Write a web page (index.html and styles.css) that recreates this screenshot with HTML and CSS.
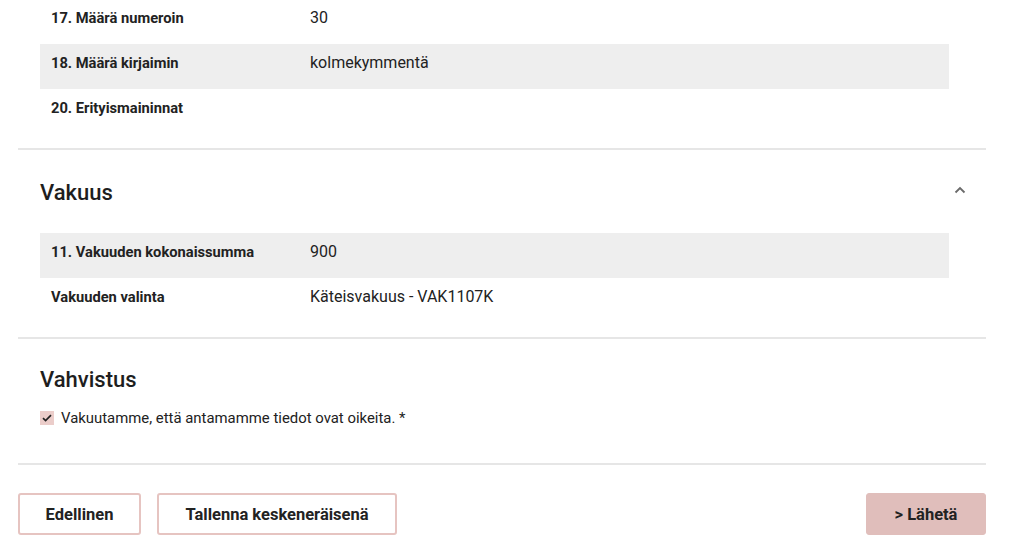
FILE: index.html
```html
<!DOCTYPE html>
<html lang="fi">
<head>
<meta charset="utf-8">
<link rel="stylesheet" href="styles.css">
</head>
<body>
<main class="page">
  <section class="section section-first">
    <div class="table">
      <div class="row"><div class="label">17. Määrä numeroin</div><div class="value">30</div></div>
      <div class="row alt"><div class="label">18. Määrä kirjaimin</div><div class="value">kolmekymmentä</div></div>
      <div class="row"><div class="label">20. Erityismaininnat</div><div class="value"></div></div>
    </div>
  </section>
  <section class="section">
    <div class="section-head">
      <h2 class="title">Vakuus</h2>
      <svg class="chevron" width="12" height="8" viewBox="0 0 12 8" aria-hidden="true"><path d="M1.5 6.5 L6 2 L10.5 6.5" fill="none" stroke="#6a6a6a" stroke-width="1.8"/></svg>
    </div>
    <div class="table">
      <div class="row alt"><div class="label">11. Vakuuden kokonaissumma</div><div class="value">900</div></div>
      <div class="row"><div class="label">Vakuuden valinta</div><div class="value">Käteisvakuus - VAK1107K</div></div>
    </div>
  </section>
  <section class="section">
    <h2 class="title title-plain">Vahvistus</h2>
    <label class="check">
      <span class="box"><svg width="10" height="8" viewBox="0 0 10 8" aria-hidden="true"><path d="M1 4.2 L3.6 6.6 L9 1.2" fill="none" stroke="#222" stroke-width="1.7"/></svg></span>
      <span class="check-text">Vakuutamme, että antamamme tiedot ovat oikeita. *</span>
    </label>
  </section>
  <footer class="actions">
    <div class="actions-left">
      <button class="btn btn-outline btn-prev">Edellinen</button>
      <button class="btn btn-outline btn-save">Tallenna keskeneräisenä</button>
    </div>
    <button class="btn btn-primary">&gt; Lähetä</button>
  </footer>
</main>
</body>
</html>
```
FILE: styles.css
```css
* { box-sizing: border-box; }
html, body { margin: 0; padding: 0; background: #fff; }
body {
  font-family: Roboto, "Liberation Sans", Arial, sans-serif;
  color: #222;
  width: 1016px;
  height: 546px;
  overflow: hidden;
}
.page {
  width: 968px;
  margin-left: 18px;
}
.section {
  border-bottom: 2px solid #e6e6e6;
  padding: 0 37px 14px 22px;
}
.section-first {
  margin-top: -1px;
}
.table {
  display: flex;
  flex-direction: column;
}
.row {
  display: flex;
  align-items: center;
  height: 45px;
  padding: 0 11px 8px;
}
.row.alt { background: #eeeeee; }
.label {
  width: 259px;
  font-size: 14.7px;
  font-weight: 700;
}
.value {
  font-size: 16px;
  font-weight: 400;
}
.section-head {
  display: flex;
  align-items: center;
  justify-content: space-between;
  height: 83px;
  padding-top: 1px;
}
.chevron {
  margin-right: -17px;
  margin-top: -4px;
}
.title {
  margin: 0;
  font-size: 22px;
  font-weight: 500;
  color: #1e1e1e;
}
.title-plain {
  padding-top: 29px;
  line-height: 24px;
}
.check {
  display: flex;
  align-items: center;
  gap: 7px;
  margin-top: 17px;
  margin-bottom: 22px;
  font-size: 14.9px;
}
.box {
  width: 14px;
  height: 14px;
  background: #ebcdca;
  display: flex;
  align-items: center;
  justify-content: center;
}
.actions {
  display: flex;
  justify-content: space-between;
  align-items: center;
  padding-top: 28px;
}
.actions-left {
  display: flex;
  gap: 16px;
}
.btn {
  font-family: inherit;
  font-size: 16.5px;
  font-weight: 700;
  color: #222;
  height: 42px;
  border-radius: 3px;
  cursor: pointer;
}
.btn-outline {
  background: #fff;
  border: 2px solid #e6c4c1;
}
.btn-prev { width: 123px; }
.btn-save { width: 240px; }
.btn-primary {
  width: 120px;
  background: #e0bebb;
  border: 1px solid #e0bebb;
}
```
